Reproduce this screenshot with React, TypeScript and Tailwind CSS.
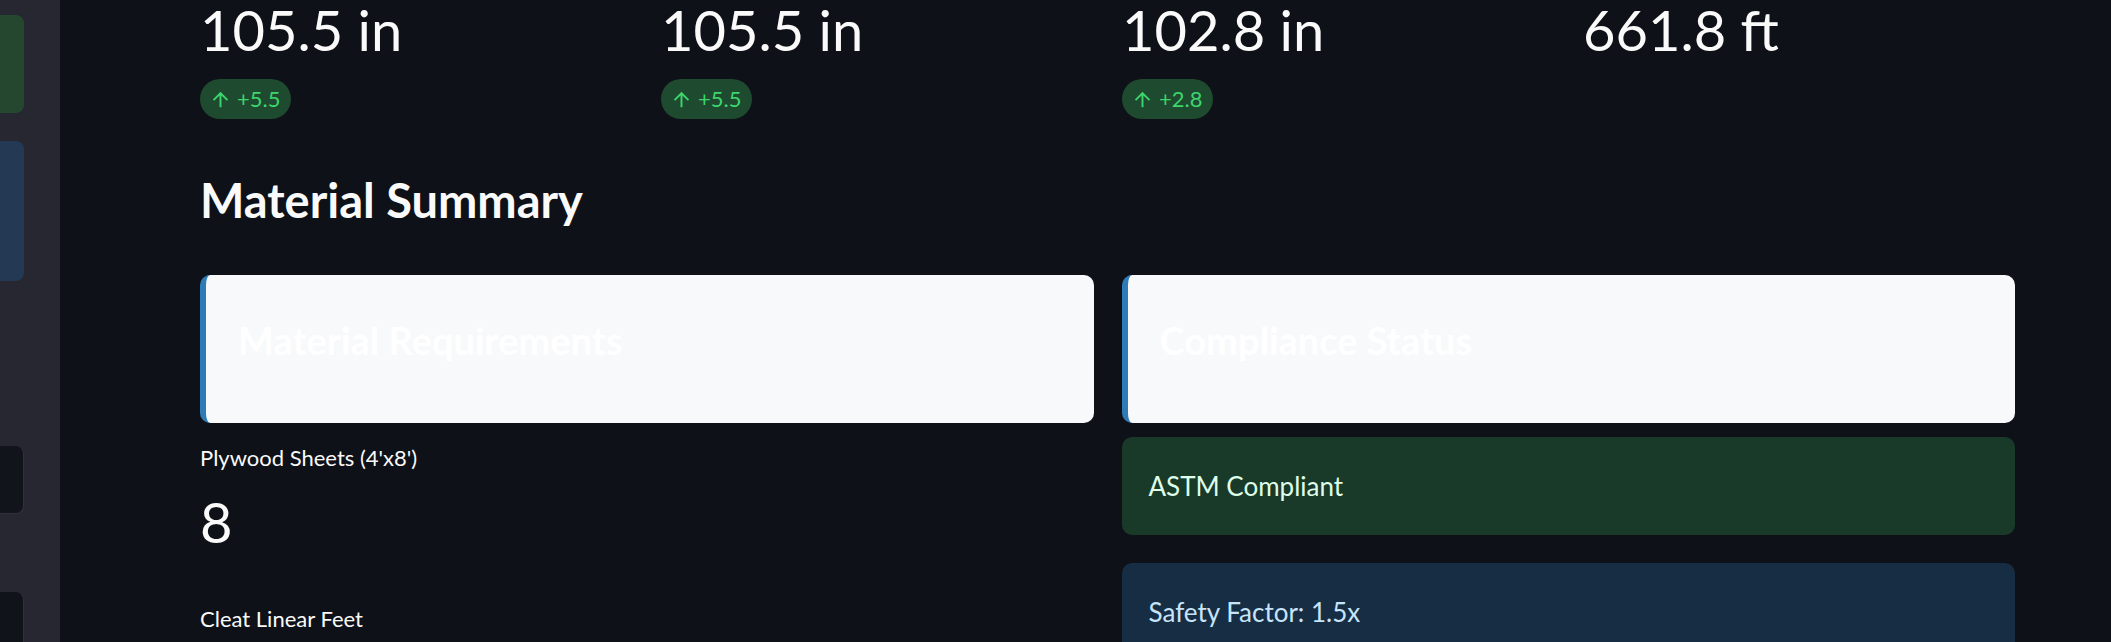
import React from 'react';

interface Metric {
  value: string;
  delta?: string;
}

const metrics: Metric[] = [
  { value: '105.5 in', delta: '+5.5' },
  { value: '105.5 in', delta: '+5.5' },
  { value: '102.8 in', delta: '+2.8' },
  { value: '661.8 ft' },
];

const ArrowUp = () => (
  <svg viewBox="0 0 24 24" className="w-[23px] h-[23px] shrink-0" fill="currentColor">
    <path d="M4 12l1.41 1.41L11 7.83V20h2V7.83l5.58 5.59L20 12l-8-8-8 8z" />
  </svg>
);

const Sidebar = () => (
  <div className="w-[60px] shrink-0 bg-[#262730] flex flex-col pt-[15px]">
    <div className="shrink-0 w-[24px] h-[98px] rounded-r-lg bg-[#26472f]" />
    <div className="shrink-0 w-[24px] h-[140px] mt-[28px] rounded-r-lg bg-[#243953]" />
    <div className="shrink-0 w-[24px] h-[68px] mt-[165px] rounded-r-lg bg-[#12141c] border-r border-b border-[#30323b]" />
    <div className="shrink-0 w-[24px] h-[80px] mt-[78px] rounded-tr-lg bg-[#10131a] border-r border-[#30323b]" />
  </div>
);

const InfoCard = ({ title }: { title: string }) => (
  <div className="h-[148px] rounded-[10px] bg-[#f8f9fb] border-l-[6px] border-[#2e7bb8] pl-[32px] pt-[46px]">
    <h4 className="text-[38px] leading-none font-bold text-white">{title}</h4>
  </div>
);

export default function App() {
  return (
    <div className="flex h-[642px] w-full overflow-hidden bg-[#0e1117] text-[#fafafa] font-['Lato',_sans-serif]">
      <Sidebar />

      <main className="flex-1 pl-[140px] pr-[96px] pt-[2px]">
        {/* Metrics */}
        <div className="grid grid-cols-4 gap-[29px]">
          {metrics.map((m, i) => (
            <div key={i} className="flex flex-col items-start">
              <div className="text-[56px] leading-none">{m.value}</div>
              {m.delta && (
                <div className="mt-[21px] h-[40px] pl-[9px] pr-[11px] rounded-full bg-[#1e4a2f] text-[#3dd56d] flex items-center gap-[5px]">
                  <ArrowUp />
                  <span className="text-[22px] leading-none">{m.delta}</span>
                </div>
              )}
            </div>
          ))}
        </div>

        <h3 className="mt-[58px] text-[47px] leading-none font-bold">Material Summary</h3>

        <div className="mt-[51px] grid grid-cols-2 gap-[28px]">
          {/* Left column */}
          <div className="flex flex-col">
            <InfoCard title="Material Requirements" />
            <div className="mt-[24px] text-[22px] leading-none">Plywood Sheets (4'x8')</div>
            <div className="mt-[25px] text-[56px] leading-none">8</div>
            <div className="mt-[58px] text-[22px] leading-none">Cleat Linear Feet</div>
          </div>

          {/* Right column */}
          <div className="flex flex-col">
            <InfoCard title="Compliance Status" />
            <div className="mt-[14px] h-[98px] rounded-[10px] bg-[#193a29] text-[#dffde9] flex items-center pl-[27px] text-[26px]">
              ASTM Compliant
            </div>
            <div className="mt-[28px] h-[98px] rounded-[10px] bg-[#172d43] text-[#c7e4fa] flex items-center pl-[27px] text-[26px]">
              Safety Factor: 1.5x
            </div>
          </div>
        </div>
      </main>
    </div>
  );
}
